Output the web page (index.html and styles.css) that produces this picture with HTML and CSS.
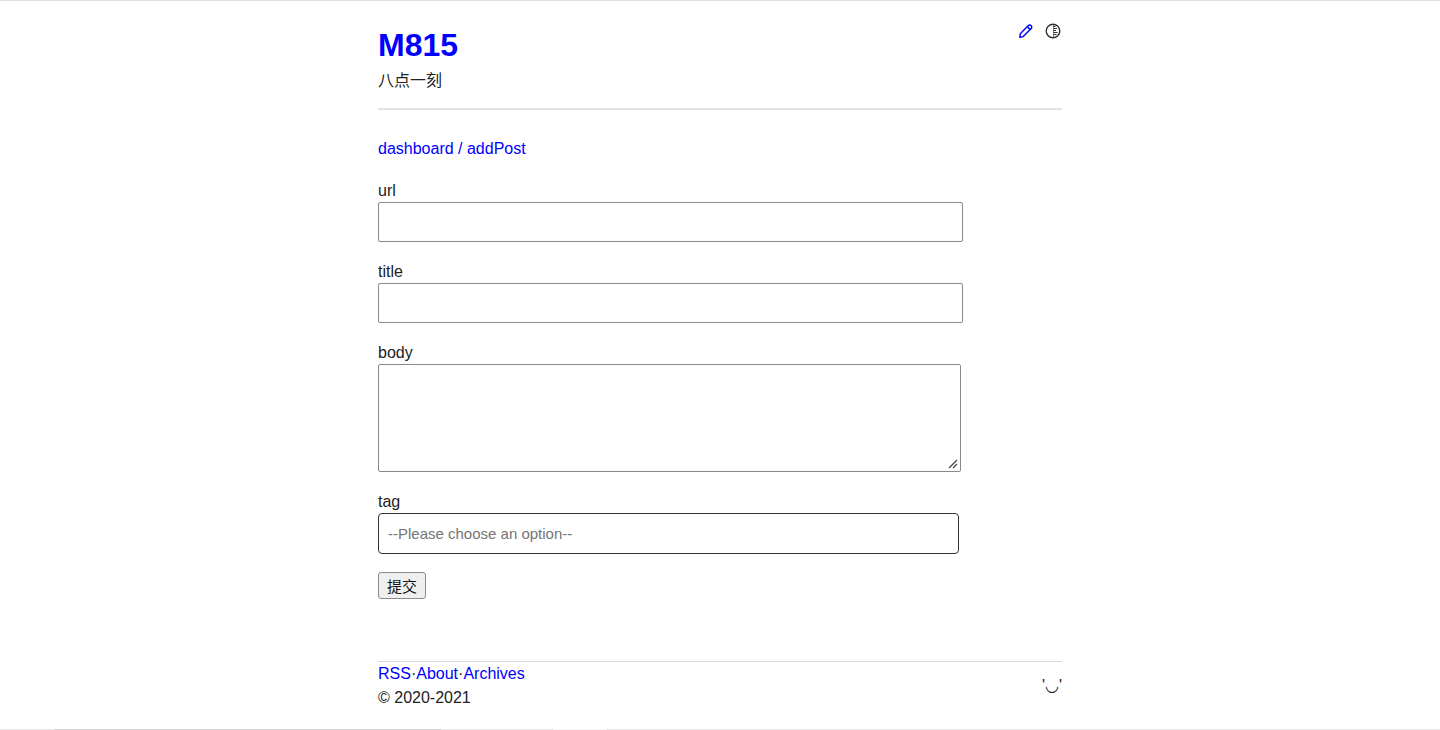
FILE: index.html
```html
<!DOCTYPE html>
<html lang="zh">
<head>
  <meta charset="UTF-8" />
  <meta name="viewport" content="width=device-width, initial-scale=1.0"/>
  <title>addPost - M815</title>
  <link rel="stylesheet" href="styles.css">
</head>
<body>
  <div class="container">

    <header>
      <div class="brand">
        <h1><a href="#">M815</a></h1>
        <p>八点一刻</p>
      </div>
      <div class="tools">
        <a href="#" aria-label="Write">
          <svg width="15" height="16" viewBox="0 0 15 16" fill="none" stroke="currentColor" stroke-width="1.400" stroke-linejoin="round">
            <path d="M1.800 14.200l.5-3.500L10.300 2.600a1.900 1.900 0 0 1 2.700 0l.2.200a1.900 1.900 0 0 1 0 2.700L5.200 13.600z"/>
            <path d="M9.800 3.200q.2 2.600 2.800 2.800"/>
          </svg>
        </a>
        <button class="theme-btn" type="button" aria-label="Theme">
          <svg width="16" height="16" viewBox="0 0 16 16" fill="none" stroke="currentColor" stroke-width="1.400">
            <circle cx="8" cy="8" r="6.800"/>
            <path d="M8.500 1v14" stroke-width="1" opacity=".6"/>
            <path d="M8.500 3.500h2M8.500 5.500h3.500M8.500 7.500h2.500M8.500 9.500h4M8.500 11.500h3" stroke-width="1.200"/>
          </svg>
        </button>
      </div>
    </header>

    <main>
      <nav><a href="#">dashboard / addPost</a></nav>

      <form>
        <div class="field">
          <label for="url">url</label>
          <input type="text" id="url" name="url">
        </div>
        <div class="field">
          <label for="title">title</label>
          <input type="text" id="title" name="title">
        </div>
        <div class="field">
          <label for="body">body</label>
          <textarea id="body" name="body"></textarea>
        </div>
        <div class="field">
          <label for="tag">tag</label>
          <select id="tag" name="tag">
            <option value="">--Please choose an option--</option>
          </select>
        </div>
        <button class="submit-btn" type="button">提交</button>
      </form>
    </main>

    <footer>
      <div>
        <div><a href="#">RSS</a>·<a href="#">About</a>·<a href="#">Archives</a></div>
        <div>© 2020-2021</div>
      </div>
      <span class="smile">'◡'</span>
    </footer>

  </div>
</body>
</html>
```
FILE: styles.css
```css
* {
  box-sizing: border-box;
}

body {
  font-family: "Liberation Sans", Arial, "Noto Sans CJK SC", sans-serif;
  font-size: 16px;
  line-height: 24px;
  margin: 0;
  min-height: 100vh;
  color: #222;
  background: linear-gradient(to right, #e8e8e8 54px, #d6d6d6 54px 441px, #e8e8e8 441px 553px, #f6f6f6 553px 607px, #e8e8e8 607px) bottom / 100% 1px no-repeat #fff;
  border-top: 1px solid #e0e0e0;
}

a {
  color: #00f;
  text-decoration: none;
}

.container {
  max-width: 716px;
  margin: 0 auto;
  padding: 20px 16px 18px;
}

header {
  display: flex;
  justify-content: space-between;
  align-items: flex-start;
  padding-bottom: 15px;
  border-bottom: 2px solid #e2e2e2;
}

h1 {
  font-size: 32px;
  line-height: 48px;
  margin: 0;
}

.brand p {
  margin: 0;
}

.tools {
  display: flex;
  gap: 12px;
  padding: 2px 1px 0 0;
}

.tools a,
.theme-btn {
  display: flex;
  padding: 0;
  border: none;
  background: none;
}

.theme-btn {
  color: #333;
  cursor: pointer;
}

nav {
  padding: 27px 0 18px;
}

.field {
  margin-bottom: 18px;
}

.field label {
  display: block;
  line-height: 23px;
}

input,
textarea,
select {
  display: block;
  box-sizing: content-box;
  width: 85%;
  margin: 0;
  font-family: inherit;
  font-size: 15px;
  background: #fff;
  border: 1px solid #8a8a8a;
  border-radius: 2px;
}

input {
  height: 36px;
  padding: 1px;
}

textarea {
  height: 106px;
  padding: 0;
}

textarea::-webkit-resizer {
  background: url("data:image/svg+xml,%3Csvg xmlns='http://www.w3.org/2000/svg' width='15' height='15'%3E%3Cpath d='M4 12l8-8M8 12l4-4' stroke='%23444' stroke-width='1.2'/%3E%3C/svg%3E") no-repeat;
}

select {
  appearance: none;
  box-sizing: border-box;
  height: 41px;
  padding: 0 9px;
  color: #757575;
  border-color: #333;
  border-radius: 4px;
}

.submit-btn {
  display: block;
  height: 27px;
  padding: 0 8px;
  font-family: inherit;
  font-size: 15px;
  color: #111;
  background: #efefef;
  border: 1px solid #8a8a8a;
  border-radius: 3px;
  cursor: pointer;
}

footer {
  display: flex;
  justify-content: space-between;
  align-items: center;
  margin-top: 62px;
  border-top: 1px solid #d8d8d8;
}
```
